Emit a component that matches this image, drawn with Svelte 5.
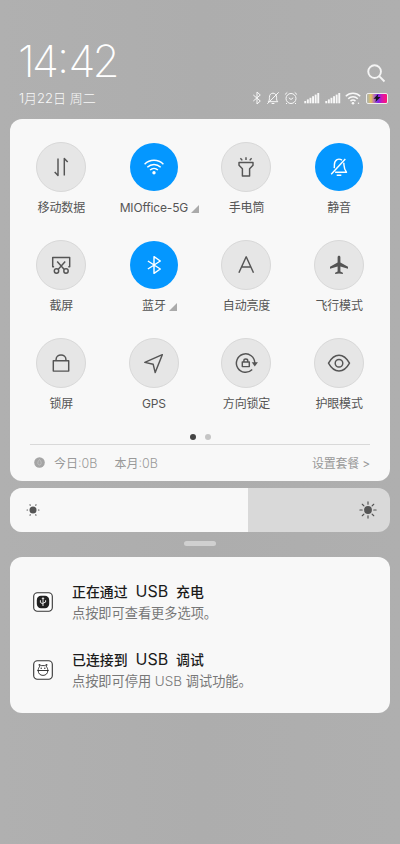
<script lang="ts">
  interface Tile {
    id: string;
    label: string;
    active?: boolean;
    expandable?: boolean;
  }

  const tiles: Tile[] = [
    { id: "data", label: "移动数据" },
    { id: "wifi", label: "MIOffice-5G", active: true, expandable: true },
    { id: "torch", label: "手电筒" },
    { id: "mute", label: "静音", active: true },
    { id: "screenshot", label: "截屏" },
    { id: "bluetooth", label: "蓝牙", active: true, expandable: true },
    { id: "auto", label: "自动亮度" },
    { id: "airplane", label: "飞行模式" },
    { id: "lock", label: "锁屏" },
    { id: "gps", label: "GPS" },
    { id: "rotation", label: "方向锁定" },
    { id: "eye", label: "护眼模式" },
  ];

  const signals = [0, 1];
  const bars = [0, 1, 2, 3, 4, 5];
  const rays = [0, 45, 90, 135, 180, 225, 270, 315];
  const dimRays = [0, 60, 120, 180, 240, 300];

  let brightness = $state(62.5);
</script>

<div class="shade">
  <header>
    <div class="clock">14<span>:</span>42</div>
    <svg class="search" viewBox="0 0 20 20">
      <circle cx="8" cy="8" r="6.7" />
      <path d="M12.8 12.8l5.6 5.6" />
    </svg>
  </header>

  <div class="status">
    <span class="date">1月22日 周二</span>
    <div class="status-icons">
      <svg width="10" height="14" viewBox="0 0 10 14">
        <path d="M1.3 4l7 6L5 13V1l3.3 3-7 6" />
      </svg>
      <svg class="bell" width="14" height="14" viewBox="0 0 14 14">
        <path d="M2.2 10.7c1.2-1 1.2-2 1.2-4.4 0-5.5 7.2-5.5 7.2 0 0 2.4 0 3.4 1.2 4.4zM5.6 12.5h2.8M1.3 12.8L12.7 1.3" />
      </svg>
      <svg class="alarm" width="14" height="14" viewBox="0 0 14 14">
        <circle cx="7" cy="7.5" r="5" />
        <path d="M4.8 6.8L7 8.5l2.2-1.7M.9 3.6l2.4-2.2M13.1 3.6l-2.4-2.2M3 12l-1 1M11 12l1 1" />
      </svg>
      {#each signals as signal (signal)}
        <svg class="signal" width="16" height="12" viewBox="0 0 16 12">
          {#each bars as bar (bar)}
            <rect x={0.3 + bar * 2.6} y={9 - bar * 1.6} width="1.9" height={2.3 + bar * 1.6} />
          {/each}
        </svg>
      {/each}
      <svg class="wifi" width="16" height="13" viewBox="0 0 16 13">
        <path d="M.8 4.3c4-4 10.4-4 14.4 0M3.2 6.8c2.8-2.8 6.8-2.8 9.6 0M5.5 9.1c1.5-1.4 3.5-1.4 5 0" />
        <circle cx="8" cy="11.2" r="1.3" />
        <circle cx="13.5" cy="11.3" r=".7" />
      </svg>
      <span class="battery">
        <svg width="8" height="8" viewBox="0 0 8 8"><path d="M5.3 0L.5 4.8h2.6L2.5 8l5-5H4.7z" /></svg>
      </span>
    </div>
  </div>

  <section class="card panel">
    <div class="tiles">
      {#each tiles as tile (tile.id)}
        <div class="tile">
          <button class="round" class:active={tile.active} aria-label={tile.label}>
            <svg width="24" height="24" viewBox="0 0 24 24">
              {#if tile.id === "data"}
                <path d="M9 3.5v17l-3.3-3.6M15.3 20.5v-17l3.4 3.6" />
              {:else if tile.id === "wifi"}
                <path d="M2.6 9.2c5.3-5.2 13.5-5.2 18.8 0M5.3 12.2c3.8-3.7 9.6-3.7 13.4 0M8.1 15.1c2.3-2.2 5.5-2.2 7.8 0" />
                <circle class="solid" cx="12" cy="17.7" r="1.7" />
              {:else if tile.id === "torch"}
                <path d="M5 7.5h14v2.8l-3.4 3.5v7.2H8.4v-7.2L5 10.3zM12 2.2v2.9M6.4 3.2l1.9 2.2M17.6 3.2l-1.9 2.2" />
              {:else if tile.id === "mute"}
                <path d="M7.2 13.2c.2-1.1.2-2.5.2-3.5 0-5.5 4.4-6.7 7.6-4.5M16.8 7.7c.4 4.2-.2 6.1 2.7 9.5H8.1M4.2 19.3L18.3 4M9.7 20.2h4.6" />
              {:else if tile.id === "screenshot"}
                <path d="M5.1 13.8H3.7V4.4h17v9.4h-1.4M8.2 8.5l7.1 7.9M16.2 8.5l-7.1 7.9" />
                <circle cx="7.5" cy="18" r="2.2" />
                <circle cx="17" cy="18" r="2.2" />
              {:else if tile.id === "bluetooth"}
                <path d="M5.9 8l12.4 8-6.3 4.3V3.7L18.3 8 5.9 16" />
              {:else if tile.id === "auto"}
                <path d="M4.9 19.7l7.3-15.9 7.3 15.9M7.6 13.9h9.2" />
              {:else if tile.id === "airplane"}
                <path
                  class="solid"
                  d="M12 2.8c.9 0 1.4.6 1.4 1.7v5l7.6 4.2v2l-7.6-2.3v5.1l2.5 1.3V21L12 20.500 8.100 21v-1.200l2.500-1.300v-5.100L3 15.700v-2l7.600-4.200v-5c0-1.100.5-1.700 1.400-1.700z"
                />
              {:else if tile.id === "lock"}
                <path d="M4.3 9.8h15.4v10.3H4.3zM7.1 9.5V8.2c0-5.7 9.8-5.7 9.8 0v1.3" />
              {:else if tile.id === "gps"}
                <path d="M20.3 3.7L2.8 11.4l8.4 1.900 2 8.300z" />
              {:else if tile.id === "rotation"}
                <path d="M18.2 18.5A9.2 9.2 0 1 1 20.8 12M8.3 10.9h7v4.700h-7zM9.900 10.700V9.600c0-2.200 3.800-2.200 3.800 0v1.100" />
                <path class="solid" d="M17.700 11.300h6.200l-3.100 4.200z" />
              {:else}
                <path d="M1.5 12.2C7.3 1.6 16.7 1.6 22.5 12.2 16.7 22.7 7.3 22.7 1.5 12.2z" />
                <circle cx="12" cy="12.2" r="3.8" />
              {/if}
            </svg>
          </button>
          <span class="label">
            {tile.label}
            {#if tile.expandable}
              <svg class="corner" width="8" height="8" viewBox="0 0 8 8"><path d="M8 0v8H0z" /></svg>
            {/if}
          </span>
        </div>
      {/each}
    </div>

    <div class="dots">
      <i class="current"></i>
      <i></i>
    </div>

    <footer>
      <svg class="drop" width="11" height="11" viewBox="0 0 11 11">
        <circle cx="5.5" cy="5.5" r="5.3" />
        <path d="M5.5 2.5C2.9 5.3 3.7 8 5.5 8s2.6-2.7 0-5.5z" />
      </svg>
      <span class="usage">今日<b>:0B</b></span>
      <span class="usage">本月<b>:0B</b></span>
      <span class="plan">设置套餐 &gt;</span>
    </footer>
  </section>

  <div class="slider">
    <div class="fill" style="width: {brightness}%"></div>
    <svg class="sun low" width="14" height="14" viewBox="-7 -7 14 14">
      <circle r="3.5" />
      {#each dimRays as angle (angle)}
        <path d="M5.5 0h.4" transform="rotate({angle})" />
      {/each}
    </svg>
    <svg class="sun high" width="18" height="18" viewBox="-9 -9 18 18">
      <circle r="3.9" />
      {#each rays as angle (angle)}
        <path d="M5.8 0h2.3" transform="rotate({angle})" />
      {/each}
    </svg>
  </div>

  <div class="handle"></div>

  <section class="card notices">
    <article>
      <svg class="app" width="20" height="20" viewBox="0 0 20 20">
        <rect class="frame" x=".7" y=".7" width="18.6" height="18.6" rx="3.7" />
        <rect x="3.8" y="3.8" width="12.4" height="12.4" rx="4.2" />
        <path class="usb" d="M10 14V5.9M8.9 7L10 5.7 11.1 7M10 12L7.4 10.5V8.2M10 11.2l2.6-1.1V8.2" />
      </svg>
      <div>
        <h4>正在通过 <b>USB</b> 充电</h4>
        <p>点按即可查看更多选项。</p>
      </div>
    </article>
    <article>
      <svg class="app" width="20" height="20" viewBox="0 0 20 20">
        <rect class="frame" x=".7" y=".7" width="18.6" height="18.6" rx="3.7" />
        <path class="bug" d="M6.6 6.8L6 4.4l2.3 1.2h3.4L14 4.4l-.6 2.4c1 1 1.4 2.2 1.4 3.7 0 3-1.9 4.9-4.8 4.9s-4.8-1.9-4.8-4.9c0-1.5.4-2.7 1.4-3.7zM4.3 10.5h11.4" />
        <circle cx="8.2" cy="8.2" r=".7" />
        <circle cx="11.8" cy="8.2" r=".7" />
      </svg>
      <div>
        <h4>已连接到 <b>USB</b> 调试</h4>
        <p>点按即可停用 <b>USB</b> 调试功能。</p>
      </div>
    </article>
  </section>
</div>

<style>
  :global(body) {
    background: #afafaf;
  }

  .shade {
    box-sizing: border-box;
    height: 844px;
    padding: 0 10px;
    overflow: hidden;
    background: linear-gradient(90deg, #b0b0b0, #adadad 50%, #afafaf);
    font-family: Inter, "Noto Sans CJK SC", sans-serif;
    color: #555;
  }

  svg {
    display: block;
    flex: none;
    fill: none;
    stroke: currentColor;
    stroke-linejoin: round;
  }

  /* === Clock and status bar === */
  header {
    display: flex;
    align-items: flex-end;
    justify-content: space-between;
    height: 83px;
    padding: 0 4px 0 8px;
    color: #fff;
  }

  .clock {
    height: 44px;
    font-size: 44px;
    font-weight: 200;
    line-height: 45px;
    letter-spacing: -2.8px;
  }

  .clock span {
    position: relative;
    top: -4px;
    margin: 0 2px 0 1px;
  }

  .search {
    width: 19px;
    height: 19px;
    stroke-width: 2;
    stroke: #f4f4f4;
  }

  .status {
    display: flex;
    align-items: center;
    justify-content: space-between;
    height: 30px;
    padding: 0 2px 0 9px;
    color: #f8f8f8;
  }

  .date {
    margin-top: -2px;
    font-size: 13px;
    font-weight: 300;
  }

  .status-icons {
    display: flex;
    align-items: center;
    gap: 5px;
  }

  .bell {
    margin-left: -1px;
  }

  .alarm {
    margin: 0 1px 0 -1px;
  }

  .signal {
    fill: currentColor;
    stroke: none;
  }

  .wifi {
    margin-left: -1px;
    stroke-width: 1.5;
  }

  .wifi circle {
    fill: currentColor;
    stroke: none;
  }

  .battery {
    display: grid;
    place-items: center;
    box-sizing: border-box;
    width: 22px;
    height: 11px;
    border: 1px solid #eee;
    border-radius: 2px;
    background: linear-gradient(90deg, #b5b5a5 5%, #e5c15b 20%, #bc73b0 35%, #7825ed 55%, #d516b0 75%, #ff1774);
  }

  .battery svg {
    fill: #15151c;
    stroke: none;
  }

  /* === Toggle panel === */
  .card {
    border-radius: 12px;
    background: #f8f8f8;
  }

  .panel {
    display: flex;
    flex-direction: column;
    box-sizing: border-box;
    height: 362px;
    margin-top: 6px;
    padding: 23px 4px 0 5px;
  }

  .tiles {
    display: grid;
    grid-template-columns: repeat(4, 92.6px);
    grid-auto-rows: 98px;
    height: 292px;
  }

  .tile {
    display: flex;
    flex-direction: column;
    align-items: center;
  }

  .round {
    display: grid;
    place-items: center;
    box-sizing: border-box;
    width: 50px;
    height: 50px;
    padding: 0;
    border: 1px solid #d8d8d8;
    border-radius: 50%;
    background: #e6e6e6;
    color: #555;
  }

  .round svg {
    stroke-width: 1.45;
  }

  .round.active {
    width: 48px;
    height: 48px;
    margin: 1px;
    border: 0;
    background: #0497ff;
    color: #fff;
  }

  .solid {
    fill: currentColor;
    stroke: none;
  }

  .label {
    position: relative;
    height: 18px;
    margin-top: 7px;
    font-size: 12px;
    letter-spacing: -0.15px;
    line-height: 18px;
    white-space: nowrap;
  }

  .corner {
    position: absolute;
    top: 6px;
    left: calc(100% + 3px);
    fill: #aaa;
    stroke: none;
  }

  .dots {
    display: flex;
    justify-content: center;
    gap: 9px;
    height: 6px;
  }

  .dots i {
    width: 6px;
    height: 6px;
    border-radius: 50%;
    background: #c5c5c5;
  }

  .dots .current {
    background: #444;
  }

  footer {
    display: flex;
    align-items: center;
    height: 35px;
    margin: 4px 16px 0 15px;
    padding-left: 4px;
    border-top: 1px solid #d9d9d9;
    font-size: 12px;
    color: #999;
  }

  footer b {
    font-size: 12.5px;
    font-weight: 300;
  }

  .drop {
    margin-right: 9px;
    fill: #a5a5a5;
    stroke: none;
  }

  .drop path {
    stroke: #ccc;
    stroke-width: 0.7;
  }

  .usage {
    margin-right: 17px;
  }

  .plan {
    margin-left: auto;
    letter-spacing: -0.2px;
  }

  /* === Brightness === */
  .slider {
    position: relative;
    display: flex;
    align-items: center;
    justify-content: space-between;
    height: 44px;
    margin-top: 7px;
    padding: 0 13px 0 16px;
    border-radius: 12px;
    overflow: hidden;
    background: #d9d9d9;
  }

  .fill {
    position: absolute;
    inset: 0 auto 0 0;
    background: #f8f8f8;
  }

  .sun {
    position: relative;
    fill: #555;
    stroke: #555;
    stroke-linecap: round;
    stroke-width: 1.2;
  }

  .sun circle {
    stroke: none;
  }

  .handle {
    width: 32px;
    height: 5px;
    margin: 9px auto 11px;
    border-radius: 3px;
    background: #d0d0d0;
  }

  /* === Notifications === */
  .notices {
    box-sizing: border-box;
    height: 156px;
    padding: 22.5px 23px 0;
  }

  article {
    display: flex;
    align-items: center;
    gap: 19px;
    height: 44px;
    margin-bottom: 24px;
  }

  .app {
    color: #222;
    fill: #222;
    stroke: none;
  }

  .frame {
    fill: #fff;
    stroke: #333;
    stroke-width: 1.1;
  }

  .usb,
  .bug {
    fill: none;
    stroke: #fff;
    stroke-width: 0.9;
  }

  .bug {
    stroke: #222;
  }

  h4 {
    margin: 0;
    font-size: 13.9px;
    font-weight: 500;
    line-height: 22px;
    word-spacing: 4.2px;
    color: #1b1b1b;
  }

  h4 b {
    font-size: 16px;
    font-weight: 400;
  }

  p {
    margin: 0;
    font-size: 13.2px;
    line-height: 21px;
    color: #777;
  }

  p b {
    font-size: 13.5px;
    font-weight: 300;
  }
</style>
